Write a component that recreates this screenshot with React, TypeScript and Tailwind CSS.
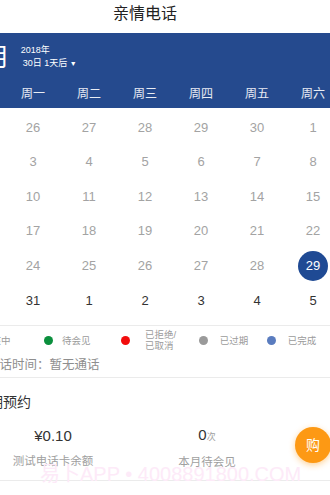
import React from "react"

const font = { fontFamily: '"Liberation Sans", "Noto Sans CJK SC", sans-serif' }

const weekdays = ["周日", "周一", "周二", "周三", "周四", "周五", "周六"]

const rows: number[][] = [
  [25, 26, 27, 28, 29, 30, 1],
  [2, 3, 4, 5, 6, 7, 8],
  [9, 10, 11, 12, 13, 14, 15],
  [16, 17, 18, 19, 20, 21, 22],
  [23, 24, 25, 26, 27, 28, 29],
  [30, 31, 1, 2, 3, 4, 5],
]

function Dot({ color, ml }: { color: string; ml: string }) {
  return <span className={`h-[9px] w-[9px] shrink-0 rounded-full ${color} ${ml}`} />
}

export default function App() {
  return (
    <div className="relative h-[495px] w-[330px] overflow-hidden bg-white" style={font}>
      <div className="-ml-[51px] w-[392px]">
        {/* title */}
        <div className="flex h-[33px] items-center justify-center pb-[5px] text-[16px] text-[#222]">亲情电话</div>

        {/* blue header */}
        <div className="h-[75px] bg-[#254a8e] text-white">
          <div className="flex h-[46px] items-center pl-[8px] pt-[2px]">
            <span className="text-[25px] leading-none">12月</span>
            <div className="ml-[11px] flex flex-col text-[9px] leading-[13px]">
              <span>2018年</span>
              <span className="pl-[2px]">
                30日 1天后 <span className="text-[7px]">▼</span>
              </span>
            </div>
          </div>
          <div className="grid h-[29px] grid-cols-7 items-end pb-[5px] text-[12px] text-white/90">
            {weekdays.map((w) => (
              <div key={w} className="text-center leading-[17px]">
                {w}
              </div>
            ))}
          </div>
        </div>

        {/* dates */}
        <div className="pt-[2px]">
          {rows.map((r, ri) => (
            <div key={ri} className="grid h-[34.6px] grid-cols-7 items-center text-[13px]">
              {r.map((d, di) => {
                const selected = ri === 4 && di === 6
                const past = ri < 5
                return (
                  <div key={di} className="flex justify-center">
                    {selected ? (
                      <span className="flex h-[30px] w-[30px] items-center justify-center rounded-full bg-[#1f4a94] text-white">
                        {d}
                      </span>
                    ) : (
                      <span className={past ? "text-[#a3a3a3]" : "text-[#333]"}>{d}</span>
                    )}
                  </div>
                )
              })}
            </div>
          ))}
        </div>

        {/* legend */}
        <div className="mt-[7px] border-t border-[#ebebeb]">
          <div className="flex h-[29px] items-center text-[9.5px] leading-[11px] text-[#9b9b9b]">
            <Dot color="bg-[#f5a623]" ml="ml-[15px]" />
            <span className="ml-[9px]">审核中</span>
            <Dot color="bg-[#0b8f3d]" ml="ml-[33px]" />
            <span className="ml-[9.5px]">待会见</span>
            <Dot color="bg-[#f20c0c]" ml="ml-[30px]" />
            <span className="ml-[15.5px] flex flex-col">
              <span>已拒绝/</span>
              <span>已取消</span>
            </span>
            <Dot color="bg-[#9a9a9a]" ml="ml-[23px]" />
            <span className="ml-[11.5px]">已过期</span>
            <Dot color="bg-[#5a7cbf]" ml="ml-[19px]" />
            <span className="ml-[11.5px]">已完成</span>
          </div>
          <div className="flex h-[22px] items-center pl-[38px] text-[12.5px] text-[#8e8e8e]">通话时间：暂无通话</div>
        </div>

        {/* reservations */}
        <div className="border-t border-[#ebebeb]">
          <div className="flex h-[35px] items-end pl-[26px] text-[14px] text-[#333]">近期预约</div>
          <div className="flex h-[67px] items-center pt-[6px]">
            <div className="flex w-[208px] flex-col items-center">
              <span className="text-[15px] leading-[18px] text-[#333]">¥0.10</span>
              <span className="mt-[8px] text-[11.5px] text-[#a0a0a0]">测试电话卡余额</span>
            </div>
            <div className="flex w-[100px] flex-col items-center">
              <span className="text-[15px] leading-[18px] text-[#333]">
                0<span className="text-[9px] text-[#a0a0a0]">次</span>
              </span>
              <span className="mt-[8px] text-[11.5px] text-[#a0a0a0]">本月待会见</span>
            </div>
            <div className="ml-[38px] -mt-[8px] flex h-[36px] w-[36px] items-center justify-center rounded-full bg-[#fd9914] text-[14px] text-white shadow-[0_2px_6px_rgba(253,153,20,0.45)]">
              购
            </div>
          </div>
          <div className="border-t border-[#ebebeb]" />
        </div>
      </div>

      {/* watermark */}
      <div className="pointer-events-none absolute left-[40px] top-[464px] text-[20px] leading-[20px] text-[#fdeaf8]">
        易卜APP • 4008891800.COM
      </div>
    </div>
  )
}
